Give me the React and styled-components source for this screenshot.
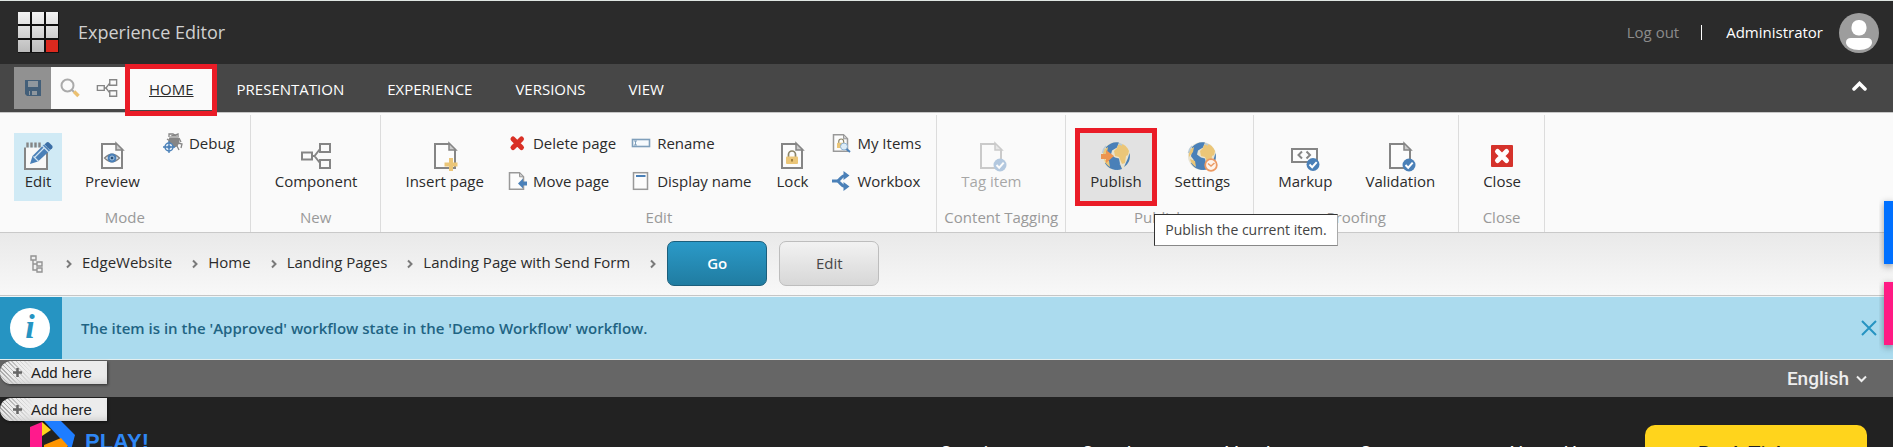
import React from 'react';
import styled, { createGlobalStyle, css } from 'styled-components';

const GlobalStyle = createGlobalStyle`
  *, *::before, *::after { box-sizing: border-box; }
  body {
    margin: 0;
    background: #222;
    font-family: "Open Sans", "Liberation Sans", sans-serif;
    font-size: 15px;
    color: #2b2b2b;
  }
  a { color: inherit; text-decoration: none; }
  button {
    font: inherit;
    color: inherit;
    background: none;
    border: 0;
    padding: 0;
    margin: 0;
    cursor: pointer;
  }
  svg { display: block; flex: none; }
`;

const Shell = styled.div`
  position: relative;
  height: 100vh;
  overflow: hidden;
  border-top: 1px solid #dfe6e2;
`;

/* ---------- top bar ---------- */
const TopBar = styled.header`
  display: flex;
  align-items: center;
  height: 63px;
  padding: 0 14px 0 18px;
  background: #2b2b2b;
`;
const Title = styled.h1`
  flex: 1;
  margin: 0 0 2px 19px;
  font-size: 18px;
  font-weight: 400;
  color: #d0d0d0;
`;
const Account = styled.div`
  display: flex;
  align-items: center;
  color: #fff;
`;
const LogOut = styled.a`
  padding-bottom: 2px;
  color: #8b8b8b;
`;
const Divider = styled.span`
  width: 1px;
  height: 15px;
  margin: 0 24px 0 22px;
  background: #fff;
`;
const UserName = styled.span`
  margin-right: 16px;
  padding-bottom: 2px;
`;

/* ---------- tab strip ---------- */
const TabStrip = styled.nav`
  display: flex;
  align-items: center;
  height: 49px;
  padding: 0 26px 0 14px;
  background: #474747;
  border-bottom: 1px solid #c6c6c6;
`;
const QuickBar = styled.div`
  display: flex;
  height: 42px;
  padding-right: 2px;
  background: #fafafa;
`;
const QuickButton = styled.button`
  display: flex;
  align-items: center;
  justify-content: center;
  width: 37px;
  background: ${(p) => (p.$disabled ? '#919191' : 'transparent')};
`;
const Highlight = css`
  &::after {
    content: '';
    position: absolute;
    inset: ${(p) => p.$frame};
    border: 5px solid #ea1c27;
    z-index: 2;
    pointer-events: none;
  }
`;
const Tab = styled.a`
  position: relative;
  padding: 1px 21px 0 22px;
  line-height: 42px;
  color: ${(p) => (p.$active ? '#2b2b2b' : '#fff')};
  background: ${(p) => (p.$active ? '#fafafa' : 'transparent')};
  text-decoration: ${(p) => (p.$active ? 'underline' : 'none')};
  ${(p) => p.$frame && Highlight}
`;
const Collapse = styled.button`
  margin: 0 0 4px auto;
`;

/* ---------- ribbon ---------- */
const Ribbon = styled.div`
  display: flex;
  padding-top: 2px;
  background: #fafafa;
  border-bottom: 1px solid #c9c9c9;
`;
const Chunk = styled.section`
  display: flex;
  flex-direction: column;
  padding: 18px 0 5px;
  border-right: 1px solid #dcdcdc;
`;
const ChunkBody = styled.div`
  display: flex;
  gap: 13px;
  height: 68px;
  padding: 0 13px 0 14px;
`;
const ChunkLabel = styled.h2`
  margin: 6px 7px 0;
  font-size: 15px;
  font-weight: 400;
  line-height: 20px;
  text-align: center;
  color: #999;
`;
const LargeButton = styled.button`
  position: relative;
  display: flex;
  flex-direction: column;
  align-items: center;
  padding: 7px 10px 11px;
  line-height: 18px;
  white-space: nowrap;
  background: ${(p) => p.$fill || 'transparent'};
  opacity: ${(p) => (p.disabled ? 0.4 : 1)};
  color: #2b2b2b;
  ${(p) => p.$frame && Highlight}
`;
const SmallColumn = styled.div`
  display: flex;
  flex-direction: column;
  gap: 18px;
  margin-right: 2px;
`;
const SmallButton = styled.button`
  display: flex;
  align-items: center;
  gap: 6px;
  line-height: 20px;
  white-space: nowrap;
`;
const Tooltip = styled.div`
  position: absolute;
  top: 81px;
  left: 74px;
  z-index: 3;
  padding: 0 10px;
  font-size: 14px;
  line-height: 30px;
  color: #444;
  background: #fff;
  border: 1px solid;
  border-color: #333 #aaa #888 #333;
  white-space: nowrap;
`;

/* ---------- breadcrumb ---------- */
const Crumbs = styled.nav`
  display: flex;
  align-items: center;
  height: 63px;
  padding-left: 29px;
  background: linear-gradient(#e9e9e9, #f8f8f8);
  border-bottom: 1px solid #c6c6c6;
`;
const CrumbLink = styled.a`
  padding: 0 20px 4px 10px;
`;
const Lead = styled.span`
  margin-right: 22px;
`;
const PushButton = styled.button`
  width: 100px;
  height: 45px;
  margin: 0 0 1px ${(p) => (p.$primary ? '11px' : '12px')};
  padding-bottom: 2px;
  border-radius: 7px;
  border: 1px solid ${(p) => (p.$primary ? '#1c5f7c' : '#bdbdbd')};
  font-weight: ${(p) => (p.$primary ? 600 : 400)};
  color: ${(p) => (p.$primary ? '#fff' : '#474747')};
  background: ${(p) =>
    p.$primary ? 'linear-gradient(#2b9ac8, #207ca1)' : 'linear-gradient(#f2f2f2, #d7d7d7)'};
`;

/* ---------- notification ---------- */
const Notice = styled.div`
  display: flex;
  align-items: center;
  height: 64px;
  padding-right: 15px;
  border-top: 1px solid #eef6f8;
  border-bottom: 1px solid #e3eeee;
  background: #abdbee;
  color: #1f6483;
  font-weight: 600;
`;
const NoticeIcon = styled.div`
  display: flex;
  align-items: center;
  align-self: stretch;
  width: 62px;
  padding-left: 10px;
  background: #2694c2;
`;
const InfoMark = styled.span`
  width: 40px;
  height: 40px;
  border-radius: 50%;
  background: #fff;
  color: #2694c2;
  font: italic bold 34px/38px "Liberation Serif", serif;
  text-align: center;
`;
const NoticeText = styled.p`
  flex: 1;
  margin: 0 0 0 19px;
`;

/* ---------- edited page ---------- */
const LanguageBar = styled.div`
  display: flex;
  align-items: flex-start;
  justify-content: space-between;
  height: 37px;
  padding: 1px 26px 0 0;
  background: #666;
`;
const AddHere = styled.button`
  display: flex;
  align-items: center;
  gap: 8px;
  width: 107px;
  height: 23px;
  padding-left: 12px;
  border-radius: 12px 0 0 12px;
  font-family: "Liberation Sans", Arial, sans-serif;
  font-size: 15px;
  line-height: 23px;
  color: #222;
  background:
    linear-gradient(90deg, transparent 4px, #ececec 34px),
    repeating-linear-gradient(45deg, #aaa 0 1px, #eee 1px 3px);
  box-shadow: inset 0 -6px 6px -4px #ccc, 1px 1px 3px #0008;
`;
const Language = styled.button`
  display: flex;
  align-items: center;
  gap: 7px;
  font-family: Roboto, sans-serif;
  font-size: 19px;
  font-weight: 500;
  line-height: 35px;
  color: #eee;
`;
const SiteHeader = styled.header`
  padding-top: 1px;
  background: #222;
`;
const SiteRow = styled.div`
  display: flex;
  align-items: flex-start;
  padding: 0 26px 0 30px;
`;
const SiteLogo = styled.a`
  display: flex;
  gap: 10px;
  font-family: "Liberation Sans", Arial, sans-serif;
  font-size: 22px;
  font-weight: 700;
  line-height: 41px;
  color: #2f87f5;
`;
const SiteNav = styled.nav`
  display: flex;
  gap: 61px;
  margin: 21px 58px 0 auto;
  font-family: Roboto, sans-serif;
  font-size: 20px;
  line-height: 24px;
  color: #fff;
`;
const BookLink = styled.a`
  width: 222px;
  margin-top: 4px;
  border-radius: 10px;
  background: #ffd41c;
  color: #222;
  font-family: Roboto, sans-serif;
  font-size: 20px;
  font-weight: 500;
  line-height: 58px;
  text-align: center;
`;
const EdgeTabs = styled.aside`
  position: absolute;
  top: 0;
  right: 0;
  bottom: 0;
  display: flex;
  flex-direction: column;
  gap: 18px;
  padding-top: 200px;
  box-shadow: 0 0 14px #0006;
  clip-path: inset(0 0 0 -14px);
`;
const EdgeTab = styled.button`
  width: 9px;
  height: 63px;
  margin-left: -9px;
  background: ${(p) => p.$color};
  box-shadow: 0 2px 7px #0006;
`;

/* ---------- icons ---------- */
const GREY = '#858585';
const BLUE = '#4a80b8';
const SAND = '#ebc678';

const Large = ({ children }) => (
  <svg width="28" height="32" viewBox="2 0 28 32" overflow="visible" fill="none" aria-hidden="true">{children}</svg>
);
const Small = ({ children }) => (
  <svg width="20" height="20" viewBox="0 0 20 20" fill="none" aria-hidden="true">{children}</svg>
);
const Sheet = () => (
  <>
    <path d="M6 4h14l6 6v18H6z" fill="#fcfcfc" stroke={GREY} strokeWidth="2" />
    <path d="M20 3v7h7z" fill="#ccc" stroke={GREY} strokeWidth="1.5" />
  </>
);
const SmallSheet = () => (
  <>
    <path d="M2.500 1.700h10l4 4v12.600h-14z" fill="#fcfcfc" stroke="#999" strokeWidth="1.500" />
    <path d="M12.500 1.500v4.300h4.200z" fill="#ccc" stroke="#999" />
  </>
);
const CheckBadge = ({ x, y }) => (
  <g>
    <circle cx={x} cy={y} r="6.500" fill={BLUE} />
    <path d={`M${x - 3.5} ${y}l2.700 2.700 4.500-5`} stroke="#fff" strokeWidth="2" />
  </g>
);
const Padlock = ({ x, y, s }) => (
  <g transform={`translate(${x} ${y}) scale(${s})`}>
    <path d="M2.500 6V3.500a3.500 3.500 0 0 1 7 0V6" stroke="#8b8468" strokeWidth="1.700" />
    <rect y="5.500" width="12" height="7.500" rx="1" fill={SAND} />
    <path d="M6 8v2.600" stroke="#8b6b2c" strokeWidth="1.500" />
  </g>
);
const Globe = () => (
  <>
    <circle cx="16" cy="16" r="14" fill="#e9e3cf" />
    <path d="M6 7C10 2.500 15 1.500 19 2.500l-2 5-5 3-1 4 4 3 4 1 1 5-4 6.300c-5-.3-8.500-2.500-11-6.500l3-3-3-4 1-6z" fill={BLUE} />
    <path d="M18 5c4-3 9 1 11 6l-1 4-2 1-1 7-3 1-3-7-4-1-1-5 3-3z" fill={SAND} />
    <path d="M3 10l5-3-1 5-4 5zM4 19l5 2 1 6c-3-2-5-4-6-8z" fill={SAND} />
    <path d="M28 18c.5-2 1-3 1.500-5 1.500 6-1 11-5.500 14z" fill={BLUE} />
    <path d="M13 27l7-3 2 5q-5 2-9 0z" fill={BLUE} />
    <path d="M19 3.500l3 1.500M6 6c-2 2-3 4-3.500 7" stroke="#b9cbd6" strokeWidth="1.500" />
  </>
);
const Boxes = () => (
  <path d="M2 12.500h10v7H2zM20 4h10v8H20zM20 20h10v8H20zM12 16h2.500l5.500-7M14.500 16l5.500 7" stroke={GREY} strokeWidth="2" />
);

const EditIcon = () => (
  <Large>
    <rect x="3" y="6" width="22" height="23" fill="#f8f8f8" stroke={GREY} strokeWidth="2" />
    <path d="M2 5h24" stroke="#d0eaf5" strokeWidth="5" />
    <path d="M5.500 2.500v5M9.500 2.500v5M13.500 2.500v5M17.500 2.500v5" stroke={GREY} strokeWidth="2.400" />
    <path d="M8 24l2.500-8L22 4.500l6 6L16 21.500z" fill={BLUE} />
    <path d="M22.500 4.500l2-2q1.500-1 3 .5l2.500 2.500q1.500 1.500 0 3L28 10z" fill="#3b6ea5" />
    <path d="M11.500 16.500l5 5M20.500 6l6 6M13 17L22 8" stroke="#cfe3f2" strokeWidth="1.200" />
  </Large>
);
const PreviewIcon = () => (
  <Large><Sheet />
    <path d="M8.500 18q7.500-7.500 15 0-7.500 7.500-15 0z" stroke={GREY} strokeWidth="1.300" />
    <circle cx="16" cy="18" r="4.500" fill={BLUE} /><circle cx="16" cy="18" r="2" fill="#284f79" stroke="#aecbe6" />
  </Large>
);
const DebugIcon = () => (
  <Small>
    <path d="M6 4V1h4l2 1 3-1v3M4 6l3 2M16 5l2 4M15 10l4 1-1 4M14 13l2 4" stroke={GREY} strokeWidth="1.300" />
    <ellipse cx="11" cy="8" rx="5.500" ry="6.500" fill={GREY} /><path d="M7 4h8" stroke="#ddd" />
    <circle cx="6" cy="14" r="4" fill="#e4eef7" stroke={BLUE} strokeWidth="1.500" />
    <path d="M6 8v12M0 14h12" stroke={BLUE} strokeWidth="1.300" /><circle cx="6" cy="14" r="1.700" fill={BLUE} />
  </Small>
);
const ComponentIcon = () => <Large><Boxes /></Large>;
const InsertIcon = () => (
  <Large><Sheet /><path d="M22 18v13M15.500 24.500h13" stroke={SAND} strokeWidth="4" /></Large>
);
const DeleteIcon = () => (
  <Small><path d="M6 6l8.500 8.500M14.500 6L6 14.500" stroke="#d93025" strokeWidth="5" strokeLinecap="round" /></Small>
);
const MoveIcon = () => (
  <Small><SmallSheet /><path d="M20 12.500h-6" stroke={BLUE} strokeWidth="4" /><path d="M11 12.500l5-5v10z" fill={BLUE} /></Small>
);
const RenameIcon = () => (
  <Small>
    <rect x="1.500" y="6.500" width="17" height="7" fill="#f6fafd" stroke="#7f9fbb" strokeWidth="1.600" />
    <path d="M3 8h3M4.500 8v4M3 12h3" stroke="#7f9fbb" />
  </Small>
);
const DisplayIcon = () => (
  <Small><rect x="2.500" y="1.700" width="14" height="16.600" fill="#fcfcfc" stroke="#999" strokeWidth="1.500" /><path d="M5 5h9.500" stroke={BLUE} strokeWidth="2" /></Small>
);
const LockIcon = () => <Large><Sheet /><Padlock x={10} y={11} s={1} /></Large>;
const MyItemsIcon = () => (
  <Small><SmallSheet /><Padlock x={6} y={6} s={0.7} /><circle cx="13" cy="13.500" r="3.500" fill="#dcecf8" stroke="#8fb3d4" /><path d="M15.500 16l3.500 3" stroke={BLUE} strokeWidth="2" /></Small>
);
const WorkboxIcon = () => (
  <Small>
    <path d="M1 10h5.500M6 10c3 0 4-5.500 8-5.500M6 10c3 0 4 5.500 8 5.500" stroke={BLUE} strokeWidth="3" />
    <path d="M12.500 0l6 4.500-6 4.500zM12.500 11l6 4.500-6 4.500z" fill={BLUE} />
  </Small>
);
const SheetCheckIcon = () => <Large><Sheet /><CheckBadge x={25} y={25} /></Large>;
const PublishIcon = () => (
  <Large><Globe /><path d="M1 14h5v-4l8 6-8 7v-4H1z" fill="#ec9450" /></Large>
);
const SettingsIcon = () => (
  <Large><Globe /><circle cx="25" cy="25" r="5.800" fill="#fdf3ea" stroke="#ec9a63" strokeWidth="1.800" /><path d="M22 23.500l3 2.500 3.500-3" stroke="#ec9a63" strokeWidth="1.500" /></Large>
);
const MarkupIcon = () => (
  <Large>
    <rect x="3" y="9" width="25" height="13" fill="#fcfcfc" stroke={GREY} strokeWidth="2" />
    <path d="M13 11.500L9.500 15l3.500 3.500M17.500 11.500L21 15l-3.500 3.500" stroke={GREY} strokeWidth="2" />
    <CheckBadge x={24} y={24.5} />
  </Large>
);
const CloseIcon = () => (
  <Large><rect x="5" y="5" width="22" height="22" rx="1" fill="#d5322b" /><path d="M11.500 11.500l9 9M20.500 11.500l-9 9" stroke="#fff" strokeWidth="5" strokeLinecap="round" /></Large>
);
const SitecoreLogo = () => (
  <svg width="41" height="41" viewBox="0 0 41 41" aria-hidden="true">
    <defs>
      <linearGradient id="tile" x1="0" y1="0" x2="0" y2="41" gradientUnits="userSpaceOnUse">
        <stop stopColor="#f4f4f4" /><stop offset="1" stopColor="#b9b9b9" />
      </linearGradient>
    </defs>
    <rect width="41" height="41" fill="#111" />
    {[0, 14, 28].map((y) => [0, 14, 28].map((x) => (
      <rect key={`${x}-${y}`} x={x} y={y} width="12" height="12" fill={x + y === 56 ? '#dc291e' : 'url(#tile)'} />
    )))}
  </svg>
);
const Avatar = () => (
  <svg width="40" height="40" viewBox="0 0 40 40" aria-hidden="true">
    <circle cx="20" cy="20" r="20" fill="#9d9d9d" />
    <rect x="12.500" y="7" width="15" height="15.500" rx="7" fill="#fff" />
    <path d="M12 25h16q5 0 5 4.500c0 4.500-6 7.500-13 7.500S7 34 7 29.500Q7 25 12 25z" fill="#fff" />
  </svg>
);
const SaveIcon = () => (
  <svg width="16" height="16" viewBox="0 0 16 16" aria-hidden="true">
    <path d="M0 0h16v16H2l-2-2z" fill="#435f79" /><path d="M3 1h10v6H3zM4 11h8v4H4z" fill="#8f979e" /><path d="M6 11v4" stroke="#435f79" strokeWidth="2" />
  </svg>
);
const SearchIcon = () => (
  <svg width="20" height="20" viewBox="0 0 20 20" fill="none" aria-hidden="true">
    <circle cx="7.500" cy="7.500" r="6" stroke="#aaa" strokeWidth="2" /><path d="M12 12l2 2" stroke="#aaa" strokeWidth="2" /><path d="M14 13.500l4.500 4.500" stroke="#ebc070" strokeWidth="3.500" />
  </svg>
);
const TreeIcon = () => (
  <svg width="22" height="22" viewBox="0 0 32 32" fill="none" aria-hidden="true"><Boxes /></svg>
);
const SiteTreeIcon = () => (
  <svg width="15" height="18" viewBox="0 0 15 18" fill="none" stroke="#939393" strokeWidth="1.400" aria-hidden="true">
    <path d="M2 1h5v4H2zM8 7h5v4H8zM8 13h5v4H8zM4 5v10h4M4 9h4" />
  </svg>
);
const Chevron = () => (
  <svg width="6" height="10" viewBox="0 0 6 10" fill="none" aria-hidden="true"><path d="M1 1.500L4.500 5 1 8.500" stroke="#7a7a7a" strokeWidth="2" /></svg>
);
const Plus = () => (
  <svg width="11" height="11" viewBox="0 0 11 11" aria-hidden="true"><path d="M5.500 1v9M1 5.500h9" stroke="#666" strokeWidth="2.500" /></svg>
);
const PlayMark = () => (
  <svg width="45" height="52" viewBox="0 0 45 52" aria-hidden="true">
    <path d="M0 6L12 1v51H0z" fill="#ff1a8c" /><path d="M12 1l9 8-9 6z" fill="#ffd41c" />
    <path d="M14 0h17l14 14-4 15z" fill="#1e7dff" /><path d="M14 24l17-7 7 8-24 25z" fill="#ff9500" />
  </svg>
);

const chunks = [
  { label: 'Mode', items: [
    { text: 'Edit', Icon: EditIcon, fill: '#d0eaf5' },
    { text: 'Preview', Icon: PreviewIcon },
    [{ text: 'Debug', Icon: DebugIcon }],
  ] },
  { label: 'New', items: [{ text: 'Component', Icon: ComponentIcon }] },
  { label: 'Edit', items: [
    { text: 'Insert page', Icon: InsertIcon },
    [{ text: 'Delete page', Icon: DeleteIcon }, { text: 'Move page', Icon: MoveIcon }],
    [{ text: 'Rename', Icon: RenameIcon }, { text: 'Display name', Icon: DisplayIcon }],
    { text: 'Lock', Icon: LockIcon },
    [{ text: 'My Items', Icon: MyItemsIcon }, { text: 'Workbox', Icon: WorkboxIcon }],
  ] },
  { label: 'Content Tagging', items: [{ text: 'Tag item', Icon: SheetCheckIcon, disabled: true }] },
  { label: 'Publish', items: [
    { text: 'Publish', Icon: PublishIcon, fill: '#e2e2e2', frame: '-5px', tip: 'Publish the current item.' },
    { text: 'Settings', Icon: SettingsIcon },
  ] },
  { label: 'Proofing', items: [
    { text: 'Markup', Icon: MarkupIcon },
    { text: 'Validation', Icon: SheetCheckIcon },
  ] },
  { label: 'Close', items: [{ text: 'Close', Icon: CloseIcon }] },
];

function ChunkItem({ item }) {
  if (Array.isArray(item)) {
    return (
      <SmallColumn>
        {item.map(({ text, Icon }) => (
          <SmallButton key={text} type="button"><Icon />{text}</SmallButton>
        ))}
      </SmallColumn>
    );
  }
  const { text, Icon, fill, frame, disabled, tip } = item;
  return (
    <LargeButton type="button" $fill={fill} $frame={frame} disabled={disabled}>
      <Icon />
      {text}
      {tip && <Tooltip role="tooltip">{tip}</Tooltip>}
    </LargeButton>
  );
}

const crumbs = ['EdgeWebsite', 'Home', 'Landing Pages', 'Landing Page with Send Form'];
const tabs = ['PRESENTATION', 'EXPERIENCE', 'VERSIONS', 'VIEW'];
const siteLinks = ['Sessions', 'Speakers', 'Vendors', 'Sponsors', 'About Us'];

export default function App() {
  return (
    <Shell>
      <GlobalStyle />
      <TopBar>
        <SitecoreLogo />
        <Title>Experience Editor</Title>
        <Account>
          <LogOut href="#logout">Log out</LogOut>
          <Divider />
          <UserName>Administrator</UserName>
          <Avatar />
        </Account>
      </TopBar>

      <TabStrip>
        <QuickBar>
          <QuickButton type="button" $disabled aria-label="Save"><SaveIcon /></QuickButton>
          <QuickButton type="button" aria-label="Search"><SearchIcon /></QuickButton>
          <QuickButton type="button" aria-label="Navigate"><TreeIcon /></QuickButton>
        </QuickBar>
        <Tab href="#home" $active $frame="-3px -2px -6px -2px">HOME</Tab>
        {tabs.map((t) => <Tab key={t} href={`#${t.toLowerCase()}`}>{t}</Tab>)}
        <Collapse type="button" aria-label="Collapse ribbon">
          <svg width="15" height="10" viewBox="0 0 15 10" fill="none" aria-hidden="true">
            <path d="M2 8l5.500-5.500L13 8" stroke="#fff" strokeWidth="3.500" strokeLinecap="round" />
          </svg>
        </Collapse>
      </TabStrip>

      <Ribbon>
        {chunks.map(({ label, items }) => (
          <Chunk key={label}>
            <ChunkBody>{items.map((item, i) => <ChunkItem key={i} item={item} />)}</ChunkBody>
            <ChunkLabel>{label}</ChunkLabel>
          </Chunk>
        ))}
      </Ribbon>

      <Crumbs>
        <Lead><SiteTreeIcon /></Lead>
        <Chevron />
        {crumbs.map((c) => (
          <React.Fragment key={c}>
            <CrumbLink href="#item">{c}</CrumbLink>
            <Chevron />
          </React.Fragment>
        ))}
        <PushButton type="button" $primary>Go</PushButton>
        <PushButton type="button">Edit</PushButton>
      </Crumbs>

      <Notice role="status">
        <NoticeIcon><InfoMark>i</InfoMark></NoticeIcon>
        <NoticeText>The item is in the 'Approved' workflow state in the 'Demo Workflow' workflow.</NoticeText>
        <button type="button" aria-label="Dismiss">
          <svg width="18" height="18" viewBox="0 0 18 18" aria-hidden="true"><path d="M2 2l14 14M16 2L2 16" stroke="#2694c2" strokeWidth="2" /></svg>
        </button>
      </Notice>

      <LanguageBar>
        <AddHere type="button"><Plus />Add here</AddHere>
        <Language type="button">
          English
          <svg width="11" height="8" viewBox="0 0 11 8" fill="none" aria-hidden="true"><path d="M1 1.500L5.500 6 10 1.500" stroke="#eee" strokeWidth="2" /></svg>
        </Language>
      </LanguageBar>
      <SiteHeader>
        <AddHere type="button"><Plus />Add here</AddHere>
        <SiteRow>
          <SiteLogo href="#site"><PlayMark />PLAY!</SiteLogo>
          <SiteNav>{siteLinks.map((l) => <a key={l} href="#site">{l}</a>)}</SiteNav>
          <BookLink href="#book">Book Tickets</BookLink>
        </SiteRow>
      </SiteHeader>

      <EdgeTabs>
        <EdgeTab type="button" aria-label="Visitor details" $color="#0070ff" />
        <EdgeTab type="button" aria-label="Demo information" $color="#ff1a84" />
      </EdgeTabs>
    </Shell>
  );
}
